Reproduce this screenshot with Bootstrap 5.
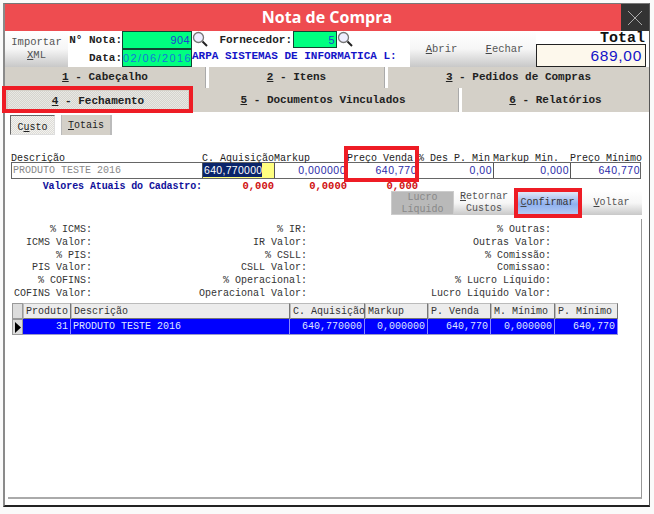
<!DOCTYPE html>
<html lang="pt"><head><meta charset="utf-8">
<link href="https://cdn.jsdelivr.net/npm/bootstrap@5.3.0/dist/css/bootstrap.min.css" rel="stylesheet">
<style>
html,body{height:514px;overflow:hidden;background:#fafafa}
body{font:10px/13px "Liberation Mono",monospace;color:#222}
.janela{position:relative;margin:3px 3px 0 3px;width:647px;height:504px;background:#fff;border-left:2px solid #8a8a8a;border-top:1px solid #777;border-bottom:2px solid #222;border-right:1px solid #555}
.titulo{height:27px;background:#ee4c50}
.titulo-txt{font:700 16px/27px "Open Sans",sans-serif;color:#fff;padding-left:28px}
.fechar-x{width:28px;height:27px;background:#333}
.barra{height:36px;font-weight:700}
.grad-btn{border:0;border-radius:0;background:linear-gradient(#fff 0,#f6f6f6 50%,#c8c8c8 100%);font:10px/13px "Liberation Mono",monospace;color:#555;padding:0;text-align:center}
.grad-btn u{color:#444}
.b-imp{width:63px;height:36px;font-size:10.5px}
.b-ab{width:63px;height:36px;font-size:10.5px}
.rot{width:54px;text-align:right;font-size:11px;height:18px;line-height:18px;color:#222;white-space:nowrap}
.verde{background:#00ff80;border:1px solid #143;font:400 11px/16px "Liberation Sans",sans-serif;letter-spacing:.4px;color:#2040d0;text-align:right;padding-right:1px}
.v1{width:70px;height:18px}.v2{width:44px;height:17px;margin-left:1px}
.vd{letter-spacing:1.4px;color:#1478d8;padding-right:0;white-space:nowrap}
.lupa{width:16px;height:16px;flex:none}
.forn{font-size:11px;width:84px;text-align:right;line-height:18px;white-space:nowrap}
.nome{color:#1414c8;font-size:11px;line-height:15px;width:218px;white-space:nowrap;overflow:hidden}
.total-t{font-size:15px;height:13px;line-height:15px;text-align:right;color:#111;padding-right:1px}
.total-v{height:23px;width:110px;background:#fdf8ec;border:1px solid #222;font:400 15.5px/21px "Liberation Sans",sans-serif;letter-spacing:.7px;color:#1414c8;text-align:right;padding-right:3px}
.abas{font-weight:700;font-size:11px;background:#d4d0c8;color:#222}
.aba{text-align:center;white-space:nowrap}
.aba u{font-weight:700}
.l1{height:21px;line-height:20px}.l2{height:24px;line-height:24px}
.sep{width:4px;background:#fff;border-left:1px solid #aaa;flex:none}
.aba-sel{background:repeating-conic-gradient(#e8e8e4 0 25%,#d6d4ce 0 50%) 0 0/2px 2px}
.sub{margin:3px 0 0 5px;height:20px;font-size:10px}
.sub-a{width:45px;height:20px;line-height:23px;text-align:center;border:1px solid;border-color:#666 #ddd #ddd #666;background:repeating-conic-gradient(#f2f2f0 0 25%,#dedcd6 0 50%) 0 0/2px 2px}
.sub-b{width:51px;height:20px;line-height:22px;text-align:center;margin-left:6px;background:#d4d0c8;border-left:1px solid #bbb;border-right:2px solid #bbb;font-weight:400}
.cab{margin:20px 0 0 6px;height:8px;line-height:8px;white-space:nowrap;color:#222}
.cab>span,.lin>div,.atu>span{flex:none}
.c1{width:191px}.c2{width:72px}.c3{width:73px}.c4{width:71px}.c5{width:75px}.c6{width:77px}.c7{width:70px}
.lin{margin:-1px 0 0 6px;height:17px;border:1px solid #666;width:630px;font:400 10.5px/15px "Liberation Sans",sans-serif;letter-spacing:.5px;color:#2a2aa8;text-align:right;background:#fff}
.lin>div{border-right:1px solid #555;padding-right:1px;height:15px}
.lin>div:last-child{border:0}
.lin .c1{color:#888;text-align:left;font:10px/15px "Liberation Mono",monospace;letter-spacing:0;padding-left:1px;width:191px}
.lin .c2{background:#ffff80;text-align:left;width:72px;color:#fff}
.sel-t{background:#0a246a;display:inline-block;width:59px;padding-left:1px;line-height:14px;letter-spacing:.3px;white-space:nowrap;overflow:hidden}
.atu{margin:0 0 0 6px;height:12px;line-height:15px;font-weight:700;font-size:10.5px;white-space:nowrap;text-align:right;color:#d01010}
.atu .c1{color:#10109a;width:191px;font-size:10px;letter-spacing:-.1px}
.bots{margin:0 0 0 386px;height:24px;width:251px}
.bots .grad-btn{height:24px;font-size:10px;line-height:12px;flex:none}
.b-luc{width:63px;background:#b9b9b9;color:#888;border:1px solid #ccc}
.b-ret{width:60px}
.b-con{width:67px;background:linear-gradient(#e8ecf8,#8fb0ee 55%,#b8cdf4);color:#333}
.b-vol{width:61px}
.painel{margin:4px 0 0 3px;width:634px;height:280px;border-right:1px solid #999;border-bottom:2px solid #aaa}
.rotulos{padding-top:5px;height:84px;white-space:nowrap;color:#333}
.rot-c{text-align:right;line-height:12.8px;flex:none}
.r1{width:84px}.r2{width:215px}.r3{width:244px}
.grade{margin-left:4px;width:606px;font-size:10px;line-height:15px}
.g-l{height:16px;white-space:nowrap;flex:none}
.g-h>div{background:#ececec;border:1px solid #999;border-color:#bbb #777 #777 #bbb;padding-left:2px;flex:none;height:16px;color:#333}
.g-r>div{background:#0000ff;color:#dfe6ff;border-right:1px solid #8a8aff;border-bottom:1px solid #99c;text-align:right;padding-right:2px;flex:none;height:16px}
.w0{width:11px}.w1{width:48px}.w2{width:219px}.w3{width:75px}.w4{width:63px}.w5{width:63px}.w6{width:64px}.w7{width:63px}
.g-r .w2{text-align:left;padding-left:2px}
.g-r .w0,.g-h .w0{background:#dcdcdc;color:#000;padding:0;border:1px solid #999}
.marca{position:absolute;border:4px solid #ee1c25;pointer-events:none}
.m1{left:-3px;top:82px;width:191px;height:27px}
.m2{left:339px;top:142px;width:75px;height:36px}
.m3{left:509px;top:184px;width:68px;height:30px}
</style></head><body>
<div class="janela">
  <div class="titulo d-flex">
    <div class="titulo-txt flex-grow-1 text-center">Nota de Compra</div>
    <div class="fechar-x d-flex align-items-center justify-content-center"><svg width="18" height="18" viewBox="0 0 18 18"><path d="M2 2 16 16M16 2 2 16" stroke="#aaa" stroke-width="1"/></svg></div>
  </div>
  <div class="barra d-flex">
    <button class="grad-btn b-imp">Importar<br><u>X</u>ML</button>
    <div class="d-flex flex-column" style="width:54px">
      <div class="rot">N° Nota:</div><div class="rot">Data:</div>
    </div>
    <div class="d-flex flex-column">
      <div class="verde v1">904</div><div class="verde v1 vd">02/06/2016</div>
    </div>
    <div class="d-flex flex-column">
      <div class="d-flex align-items-start">
        <svg class="lupa" viewBox="0 0 16 16"><circle cx="6.5" cy="6.5" r="5" fill="#eef" stroke="#777" stroke-width="1.3"/><path d="M10.5 10.5 15 15" stroke="#222" stroke-width="2"/></svg>
        <div class="forn">Fornecedor:</div><div class="verde v2">5</div>
        <svg class="lupa" viewBox="0 0 16 16"><circle cx="6.5" cy="6.5" r="5" fill="#eef" stroke="#777" stroke-width="1.3"/><path d="M10.5 10.5 15 15" stroke="#222" stroke-width="2"/></svg>
      </div>
      <div class="nome">ARPA SISTEMAS DE INFORMATICA L:</div>
    </div>
    <button class="grad-btn b-ab"><u>A</u>brir</button>
    <button class="grad-btn b-ab"><u>F</u>echar</button>
    <div style="width:110px"><div class="total-t">Total</div><div class="total-v">689,00</div></div>
  </div>
  <div class="abas">
    <div class="d-flex l1">
      <div class="aba" style="width:200px"><u>1</u> - Cabeçalho</div><div class="sep"></div>
      <div class="aba" style="width:175px"><u>2</u> - Itens</div><div class="sep"></div>
      <div class="aba flex-grow-1"><u>3</u> - Pedidos de Compras</div>
    </div>
    <div class="d-flex l2">
      <div class="aba aba-sel" style="width:180px;margin:3px 0 1px 3px;line-height:20px"><u>4</u> - Fechamento</div>
      <div class="aba" style="width:270px"><u>5</u> - Documentos Vinculados</div><div class="sep"></div>
      <div class="aba flex-grow-1"><u>6</u> - Relatórios</div>
    </div>
  </div>
  <div class="sub d-flex">
    <div class="sub-a">C<u>u</u>sto</div><div class="sub-b"><u>T</u>otais</div>
  </div>
  <div class="cab d-flex">
    <span class="c1">Descrição</span><span class="c2">C. Aquisição</span><span class="c3">Markup</span><span class="c4">Preço Venda</span><span class="c5">% Des P. Min</span><span class="c6">Markup Min.</span><span class="c7">Preço Mínimo</span>
  </div>
  <div class="lin d-flex">
    <div class="c1">PRODUTO TESTE 2016</div><div class="c2"><span class="sel-t">640,770000</span></div><div class="c3">0,000000</div><div class="c4">640,770</div><div class="c5">0,00</div><div class="c6">0,000</div><div class="c7">640,770</div>
  </div>
  <div class="atu d-flex">
    <span class="c1">Valores Atuais do Cadastro:</span><span class="c2">0,000</span><span class="c3">0,0000</span><span class="c4">0,000</span>
  </div>
  <div class="bots d-flex">
    <button class="grad-btn b-luc" disabled>Lucro<br>Líquido</button>
    <button class="grad-btn b-ret"><u>R</u>etornar<br>Custos</button>
    <button class="grad-btn b-con"><u>C</u>onfirmar</button>
    <button class="grad-btn b-vol"><u>V</u>oltar</button>
  </div>
  <div class="painel">
    <div class="rotulos d-flex">
      <div class="rot-c r1">% ICMS:<br>ICMS Valor:<br>% PIS:<br>PIS Valor:<br>% COFINS:<br>COFINS Valor:</div>
      <div class="rot-c r2">% IR:<br>IR Valor:<br>% CSLL:<br>CSLL Valor:<br>% Operacional:<br>Operacional Valor:</div>
      <div class="rot-c r3">% Outras:<br>Outras Valor:<br>% Comissão:<br>Comissao:<br>% Lucro Líquido:<br>Lucro Líquido Valor:</div>
    </div>
    <div class="grade">
      <div class="g-l g-h d-flex"><div class="w0"></div><div class="w1">Produto</div><div class="w2">Descrição</div><div class="w3">C. Aquisição</div><div class="w4">Markup</div><div class="w5">P. Venda</div><div class="w6">M. Mínimo</div><div class="w7">P. Mínimo</div></div>
      <div class="g-l g-r d-flex"><div class="w0 d-flex align-items-center justify-content-center"><svg width="7" height="11" viewBox="0 0 7 11"><path d="M1 0 7 5.5 1 11Z" fill="#000"/></svg></div><div class="w1">31</div><div class="w2">PRODUTO TESTE 2016</div><div class="w3">640,770000</div><div class="w4">0,000000</div><div class="w5">640,770</div><div class="w6">0,000000</div><div class="w7">640,770</div></div>
    </div>
  </div>
  <div class="marca m1"></div><div class="marca m2"></div><div class="marca m3"></div>
</div>
<script src="https://cdn.jsdelivr.net/npm/bootstrap@5.3.0/dist/js/bootstrap.bundle.min.js"></script>
</body></html>
